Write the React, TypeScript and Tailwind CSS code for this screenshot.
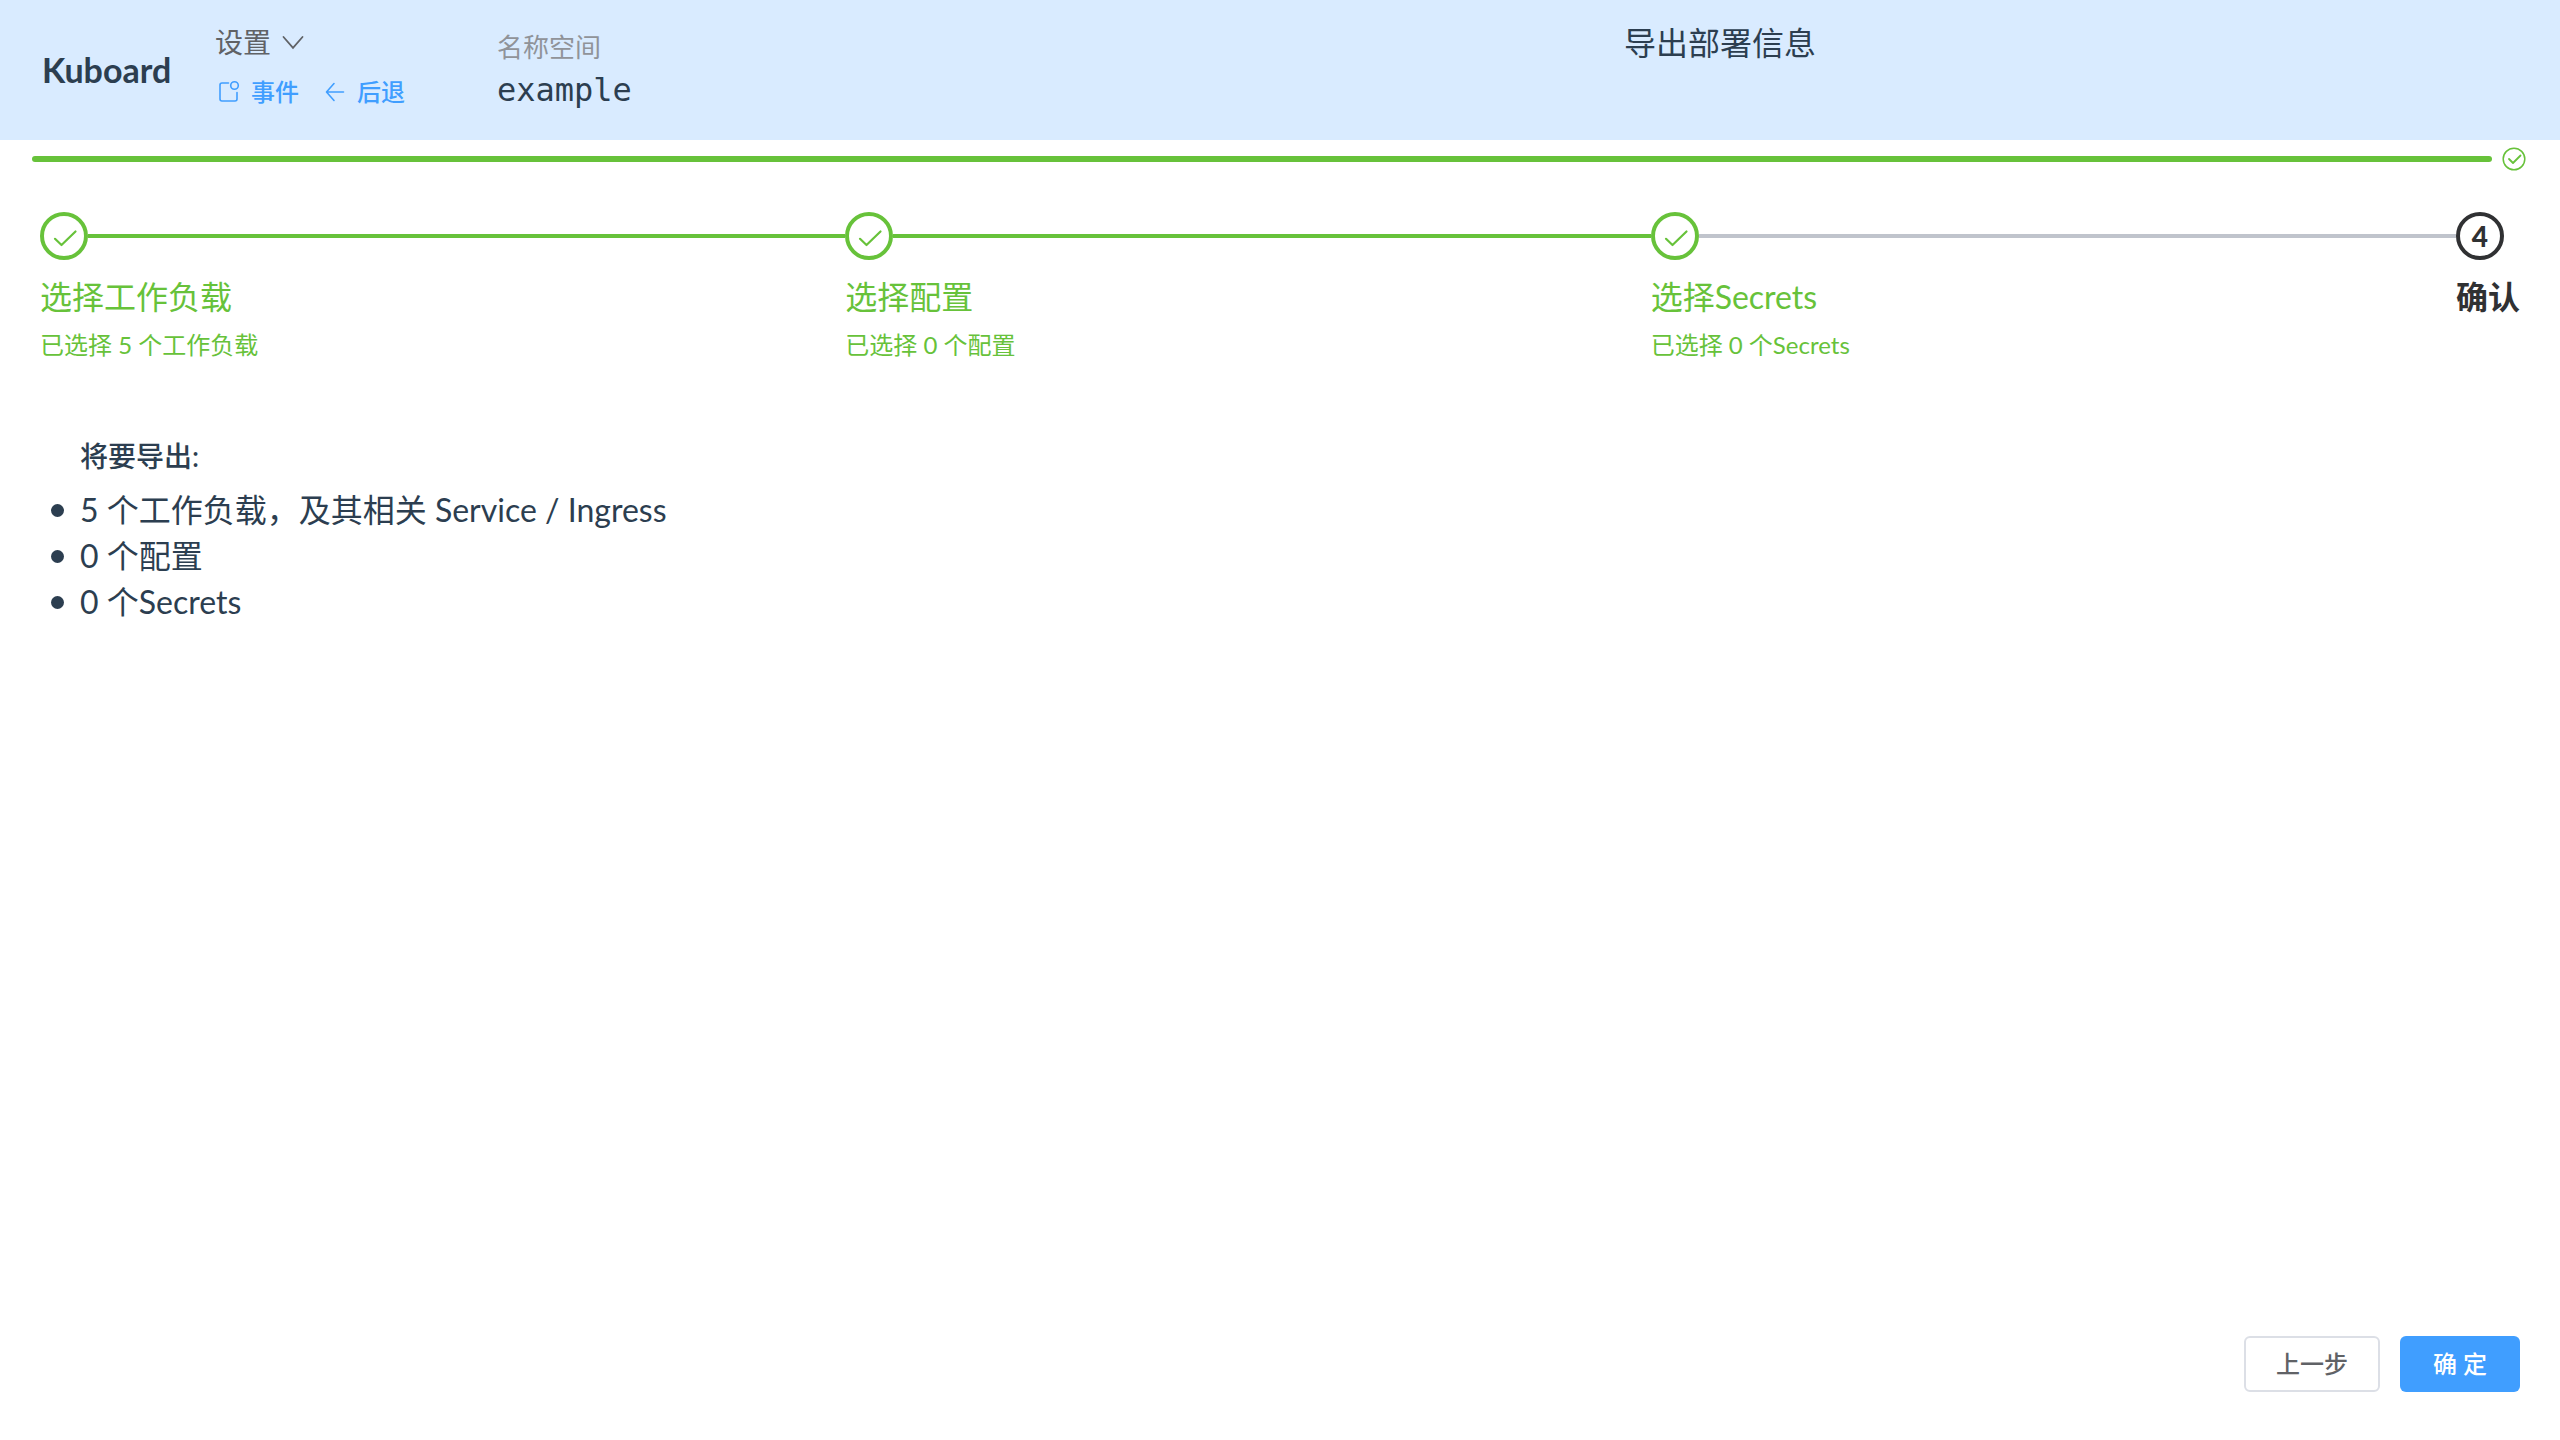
type Step = { title: string; note?: string; state: "done" | "last-done" | "current" };

const steps: Step[] = [
  { title: "选择工作负载", note: "已选择 5 个工作负载", state: "done" },
  { title: "选择配置", note: "已选择 0 个配置", state: "done" },
  { title: "选择Secrets", note: "已选择 0 个Secrets", state: "last-done" },
  { title: "确认", state: "current" },
];

const exportItems = ["5 个工作负载，及其相关 Service / Ingress", "0 个配置", "0 个Secrets"];

function ChevronIcon() {
  return (
    <svg viewBox="0 0 24 24" className="size-6" fill="none" stroke="currentColor" strokeWidth="1.800" strokeLinecap="round" aria-hidden="true">
      <path d="M2.500 7 L12 17.800 L21.500 7" />
    </svg>
  );
}

function EventIcon() {
  return (
    <svg viewBox="0 0 24 24" className="size-6" fill="none" stroke="currentColor" strokeWidth="1.600" strokeLinecap="round" aria-hidden="true">
      <path d="M11.500 3 H5 A2 2 0 0 0 3 5 V19 A2 2 0 0 0 5 21 H18 A2 2 0 0 0 20 19 V12.500" />
      <circle cx="17.500" cy="5.500" r="3.800" />
    </svg>
  );
}

function BackIcon() {
  return (
    <svg viewBox="0 0 24 24" className="size-6" fill="none" stroke="currentColor" strokeWidth="1.600" strokeLinecap="round" strokeLinejoin="round" aria-hidden="true">
      <path d="M20.500 12 H4 M11 3.500 L3.500 12 L11 20.500" />
    </svg>
  );
}

function CircleCheckIcon() {
  return (
    <svg viewBox="0 0 24 24" className="size-6 text-[#67c23a]" fill="none" stroke="currentColor" strokeLinecap="round" strokeLinejoin="round" aria-hidden="true">
      <circle cx="12" cy="12" r="10.800" strokeWidth="1.500" />
      <path d="M7 12 L11 16 L18.500 8.500" strokeWidth="1.800" />
    </svg>
  );
}

function StepItem({ step, index }: { step: Step; index: number }) {
  const current = step.state === "current";
  return (
    <li className={current ? "text-[#303133]" : "flex-1 text-[#67c23a]"} aria-current={current ? "step" : undefined}>
      <div className="flex items-center">
        <span className="flex size-12 shrink-0 items-center justify-center rounded-full border-4 border-current">
          {current ? (
            <span className="text-[28px] leading-7 font-black">{index + 1}</span>
          ) : (
            <svg viewBox="0 0 40 40" className="size-10" fill="none" stroke="currentColor" strokeWidth="2.200" strokeLinecap="round" strokeLinejoin="round" aria-hidden="true">
              <path d="M11 22.800 L17.500 29 L31.500 15.500" />
            </svg>
          )}
        </span>
        {!current && (
          <span className={step.state === "done" ? "h-1 flex-1 bg-[#67c23a]" : "h-1 flex-1 bg-[#c0c4cc]"} />
        )}
      </div>
      <h2 className={current ? "mt-3 text-[32px] leading-[50px] font-bold" : "mt-3 text-[32px] leading-[50px]"}>{step.title}</h2>
      {step.note && <p className="mt-[7px] text-2xl leading-8">{step.note}</p>}
    </li>
  );
}

export default function App() {
  return (
    <div className="flex min-h-screen flex-col bg-white font-[Lato,'Noto_Sans_CJK_SC',sans-serif] text-[#2c3e50]">
      <header className="flex h-[140px] bg-[#d9ebff]">
        <div className="flex flex-1 pl-[42px]">
          <a href="#" className="w-[173px] self-center text-[34px] leading-10 font-bold">Kuboard</a>
          <nav className="flex w-[282px] flex-col pt-[22px]">
            <button type="button" className="flex items-center gap-2.5 self-start text-[28px] leading-10 text-[#606266]">
              设置
              <ChevronIcon />
            </button>
            <div className="mt-2.5 flex gap-6 pl-0.5 text-2xl leading-10 font-medium text-[#409eff]">
              <a href="#events" className="flex items-center gap-2.5">
                <EventIcon />
                事件
              </a>
              <a href="#back" className="flex items-center gap-2.5">
                <BackIcon />
                后退
              </a>
            </div>
          </nav>
          <dl className="pt-7">
            <dt className="text-[26px] leading-[38px] text-[#909399]">名称空间</dt>
            <dd className="mt-0.5 font-['DejaVu_Sans_Mono',monospace] text-[32px] leading-11">example</dd>
          </dl>
        </div>
        <h1 className="w-[936px] pt-[18px] text-[32px] leading-[50px]">导出部署信息</h1>
      </header>

      <div className="mt-[7px] flex items-center gap-2.5 pr-[34px] pl-8">
        <div role="progressbar" aria-label="进度" aria-valuenow={100} className="h-1.5 flex-1 rounded-full bg-[#67c23a]" />
        <CircleCheckIcon />
      </div>

      <ol className="mx-10 mt-[41px] flex">
        {steps.map((step, i) => (
          <StepItem key={step.title} step={step} index={i} />
        ))}
      </ol>

      <main className="mt-[75px] flex-1 px-10">
        <h3 className="pl-10 text-[28px] leading-10 font-medium">将要导出:</h3>
        <ul className="mt-[11px] text-[32px] leading-[46px]">
          {exportItems.map((item) => (
            <li key={item} className="flex items-center">
              <span className="mr-4 ml-[11px] size-[13px] rounded-full bg-current" />
              {item}
            </li>
          ))}
        </ul>
      </main>

      <footer className="flex justify-end gap-5 px-10 pb-12 text-2xl font-medium">
        <button type="button" className="h-14 rounded-md border-2 border-[#dcdfe6] bg-white px-[30px] text-[#606266]">上一步</button>
        <button type="button" className="h-14 rounded-md bg-[#409eff] px-[33px] text-white">确 定</button>
      </footer>
    </div>
  );
}
